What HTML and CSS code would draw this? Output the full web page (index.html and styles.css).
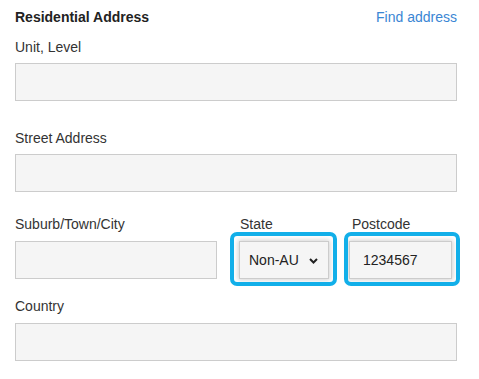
FILE: index.html
```html
<!DOCTYPE html>
<html>
<head>
<meta charset="utf-8">
<link rel="stylesheet" href="styles.css">
</head>
<body>
<div class="form">
  <div class="head">
    <span class="title">Residential Address</span>
    <a class="link">Find address</a>
  </div>
  <div class="field f-unit">
    <div class="label">Unit, Level</div>
    <div class="input"></div>
  </div>
  <div class="field f-street">
    <div class="label">Street Address</div>
    <div class="input"></div>
  </div>
  <div class="row">
    <div class="col col-suburb">
      <div class="label">Suburb/Town/City</div>
      <div class="input"></div>
    </div>
    <div class="col col-state">
      <div class="label">State</div>
      <div class="focus focus-state">
        <div class="input select">
          <span>Non-AU</span>
          <svg class="chev" width="9" height="6" viewBox="0 0 9 6"><path d="M1 1 L4.5 4.5 L8 1" fill="none" stroke="#222" stroke-width="2"/></svg>
        </div>
      </div>
    </div>
    <div class="col col-post">
      <div class="label">Postcode</div>
      <div class="focus focus-post">
        <div class="input text">1234567</div>
      </div>
    </div>
  </div>
  <div class="field f-country">
    <div class="label">Country</div>
    <div class="input"></div>
  </div>
</div>
</body>
</html>
```

FILE: styles.css
```css
* { box-sizing: border-box; }
body {
  margin: 0;
  background: #fff;
  font-family: Arial, "Liberation Sans", sans-serif;
  font-size: 14px;
  color: #333;
}
.form {
  width: 457px;
  padding: 7px 0 0 15px;
}
.head {
  display: flex;
  justify-content: space-between;
  line-height: 20px;
}
.title {
  font-weight: bold;
  color: #222;
}
.link {
  color: #3a86d4;
}
.label {
  line-height: 20px;
  margin-bottom: 6px;
  color: #333;
}
.input {
  height: 38px;
  background: #f5f5f5;
  border: 1px solid #cccccc;
}
.f-unit { margin-top: 10px; }
.f-street { margin-top: 27px; }
.row {
  display: flex;
  margin-top: 22px;
}
.row .label { margin-bottom: 7px; }
.col-suburb { width: 202px; }
.col-state { width: 90px; margin-left: 22px; }
.col-state .label { padding-left: 1px; }
.col-post { width: 103px; margin-left: 20px; }
.col-post .label { padding-left: 3px; }
.focus {
  position: relative;
}
.focus::after {
  content: "";
  position: absolute;
  top: -9px;
  bottom: -7px;
  border: 4px solid #12afe9;
  border-radius: 7px;
}
.focus-state::after {
  left: -9px;
  right: -8px;
}
.focus-post::after {
  left: -5px;
  right: -8px;
}
.focus .input {
  box-shadow: 0 0 5px 1px rgba(0, 0, 0, 0.18);
}
.select {
  display: flex;
  align-items: center;
  justify-content: space-between;
  padding: 0 10px 0 9px;
  color: #222;
}
.chev { margin-top: 1px; }
.text {
  display: flex;
  align-items: center;
  padding-left: 13px;
  color: #222;
}
.f-country { margin-top: 17px; }
.f-country .label { margin-bottom: 7px; }
```
